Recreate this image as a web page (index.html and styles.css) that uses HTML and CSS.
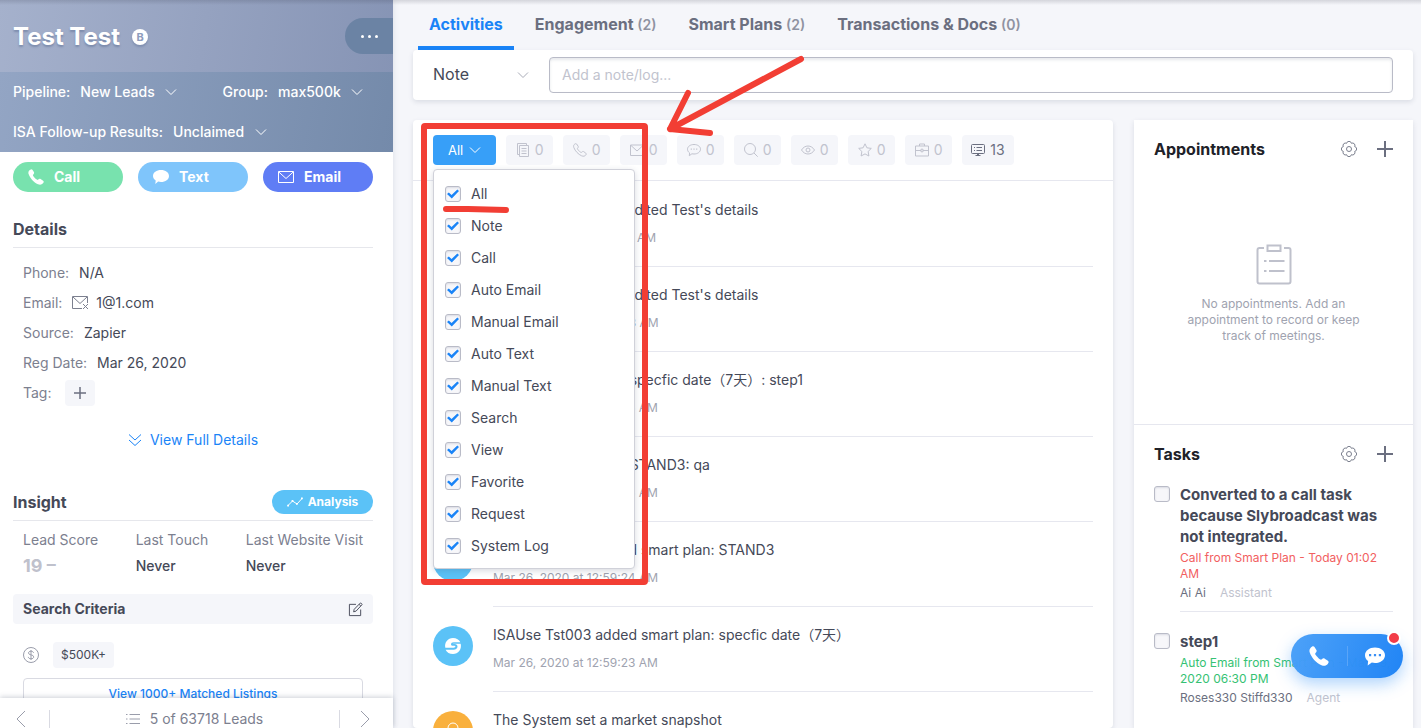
FILE: index.html
```html
<!DOCTYPE html>
<html lang="en">
<head>
<meta charset="utf-8">
<meta name="viewport" content="width=device-width, initial-scale=1">
<title>Test Test - Lead Details</title>
<link rel="stylesheet" href="styles.css">
</head>
<body>
<svg class="defs" aria-hidden="true">
  <symbol id="chev" viewBox="0 0 12 12"><path d="M1 3.500l5 5 5-5"/></symbol>
  <symbol id="plus" viewBox="0 0 16 16"><path d="M8 0v16M0 8h16"/></symbol>
  <symbol id="phone-solid" viewBox="0 0 16 16"><path d="M1.2 1.6C2.3.2 3.6-.3 4.4.7l1.5 2.4c.5.9.2 1.6-.8 2.6-.4.5 0 1.200.9 2.300 1 1.200 2.300 2.400 3.100 2.800.5.2.8.1 1.200-.3.8-.8 1.500-.9 2.300-.4l2.500 1.700c.9.7.8 1.500-.1 2.500-1.200 1.300-2.700 1.900-5 1C5.600 13.500 2 9.200.6 5.100.1 3.600.4 2.600 1.200 1.600z"/></symbol>
  <symbol id="phone-line" viewBox="0 0 14 14"><path d="M1.200 1.600C2 .7 3 .3 3.600 1l1.500 2.200c.4.7.2 1.200-.5 1.900-.5.5.1 1.400 1.200 2.600 1 1.100 2.200 2 2.700 1.700l.6-.5c.6-.6 1.100-.6 1.700-.2l2 1.500c.7.6.6 1.200-.1 1.900-1 1.100-2.200 1.500-4.100.7C5.500 11.500 2.100 8 .9 4.700.4 3.300.5 2.400 1.200 1.600z"/></symbol>
  <symbol id="mail" viewBox="0 0 16 12"><path d="M.5.5h15v11H.5zM.8 1L8 7.500 15.200 1"/></symbol>
  <symbol id="gear" viewBox="0 0 16 16"><path d="M13.700 5.600A2.450 2.450 0 0 1 13.700 10.400A2.450 2.450 0 0 1 10.400 13.700A2.450 2.450 0 0 1 5.600 13.700A2.450 2.450 0 0 1 2.300 10.400A2.450 2.450 0 0 1 2.300 5.600A2.450 2.450 0 0 1 5.600 2.300A2.450 2.450 0 0 1 10.400 2.300A2.450 2.450 0 0 1 13.700 5.600z"/><circle cx="8" cy="8" r="2.500"/></symbol>
  <symbol id="bubble-dots" viewBox="0 0 14 14"><path d="M7 1.500c3.600 0 6.500 2 6.500 4.700S10.600 11 7 11c-.8 0-1.500-.1-2.100-.2L2.300 12.700l.3-2.800C1.300 9 .5 7.700.5 6.200.5 3.500 3.400 1.500 7 1.500z"/><path d="M3.700 5.500h1.200v1.200H3.700zM6.400 5.500h1.200v1.200H6.400zM9.100 5.500h1.200v1.200H9.100z" fill="currentColor" stroke="none"/></symbol>
  <symbol id="slogo" viewBox="0 0 18 18"><path d="M9 1c3.400 0 6.200 1.600 7.400 4.300H9.700C8 5.300 7 6.100 7 7.200c0 1 .8 1.600 2 1.600h1.200c.8 0 1.200.3 1.200.8 0 .7-.7 1.100-1.800 1.100H1.300C.2 5.500 3.800 1 9 1z" fill="#fff"/><path d="M9 17c-3.400 0-6.200-1.600-7.400-4.300h7.900c2.500 0 4-1.200 4-3.200 0-1.600-1.100-2.500-2.900-2.500H9.500c-.6 0-.6-.3.2-.3h7C18 12.500 14.200 17 9 17z" fill="#fff"/></symbol>
</svg>

<div class="app">
  <aside class="side">
    <header class="lead">
      <div class="lead-top">
        <h1 class="lead-name">Test Test</h1>
        <span class="lead-badge">B</span>
        <button class="more" type="button" aria-label="More"><i></i><i></i><i></i></button>
      </div>
      <div class="lead-meta">
        <div class="lead-line">
          <label class="pick"><span>Pipeline:</span><select><option>New Leads</option></select><svg class="ic12"><use href="#chev"/></svg></label>
          <label class="pick"><span>Group:</span><select><option>max500k</option></select><svg class="ic12"><use href="#chev"/></svg></label>
        </div>
        <div class="lead-line">
          <label class="pick"><span>ISA Follow-up Results:</span><select><option>Unclaimed</option></select><svg class="ic12"><use href="#chev"/></svg></label>
        </div>
      </div>
    </header>

    <div class="side-body">
      <div class="actions">
        <button class="act call" type="button"><svg class="ic16 solid"><use href="#phone-solid"/></svg>Call</button>
        <button class="act text" type="button"><svg class="ic16 solid" viewBox="0 0 16 16"><path d="M8 1c4.500 0 8 2.500 8 6s-3.500 6-8 6c-1 0-2-.1-2.800-.4L2.300 15l.4-3.500C1 10.400 0 8.800 0 7c0-3.500 3.500-6 8-6z"/></svg>Text</button>
        <button class="act email" type="button"><svg class="mail16"><use href="#mail"/></svg>Email</button>
      </div>

      <section>
        <h2 class="sec-title details-title">Details</h2>
        <dl class="details">
          <div><dt>Phone:</dt><dd>N/A</dd></div>
          <div><dt>Email:</dt><dd><svg class="mailx" viewBox="0 0 17 14"><path d="M10 12.500H.5V.5h15V7M1 1l7 6.500L15 1M11 8l5 5M16 8l-5 5"/></svg>1@1.com</dd></div>
          <div><dt>Source:</dt><dd>Zapier</dd></div>
          <div><dt>Reg Date:</dt><dd>Mar 26, 2020</dd></div>
          <div><dt>Tag:</dt><dd><button class="tag-add" type="button" aria-label="Add tag"><svg class="ic12"><use href="#plus"/></svg></button></dd></div>
        </dl>
        <a class="full" href="#"><svg class="full-ic" viewBox="0 0 14 14"><path d="M1 1.500l6 5.500 6-5.500M1 7l6 5.500L13 7"/></svg>View Full Details</a>
      </section>

      <section>
        <div class="insight-head">
          <h2 class="sec-title">Insight</h2>
          <button class="analysis" type="button"><svg class="trend" viewBox="0 0 16 10"><path d="M1 8.500l4.500-4.500 4.500 3 5-5.500"/><path class="dots" d="M.2 7.700h1.800v1.800H.2zM4.600 3h1.800v1.800H4.600zM9 6h1.800v1.800H9zM14 .5h1.800v1.800H14z"/></svg>Analysis</button>
        </div>
        <dl class="stats">
          <div><dt>Lead Score</dt><dd class="score">19 –</dd></div>
          <div><dt>Last Touch</dt><dd>Never</dd></div>
          <div><dt>Last Website Visit</dt><dd>Never</dd></div>
        </dl>
      </section>

      <section>
        <div class="criteria-head">
          <h3>Search Criteria</h3>
          <button class="bare" type="button" aria-label="Edit"><svg class="edit" viewBox="0 0 16 16"><path d="M8.500 2.500H1.500v12h12V8M6 10.500l.6-2.700L13 1.200c.6-.6 2.500 1 1.900 1.700L8.600 9.700zM11.800 2.500l1.900 1.800"/></svg></button>
        </div>
        <div class="criteria">
          <svg class="coin" viewBox="0 0 16 16"><circle cx="8" cy="8" r="7.500"/><path d="M10.500 5.800C10.300 4.700 9.300 4.200 8 4.200s-2.500.6-2.500 1.800c0 2.700 5.200 1.100 5.200 3.900 0 1.200-1.200 1.900-2.700 1.900s-2.600-.7-2.700-1.900M8 3v10"/></svg>
          <span class="chip">$500K+</span>
        </div>
        <button class="matched" type="button">View 1000+ Matched Listings</button>
      </section>
    </div>

    <footer class="pager">
      <button class="bare" type="button" aria-label="Previous"><svg class="arrow" viewBox="0 0 10 18"><path d="M9 1L1 9l8 8"/></svg></button>
      <div class="pager-mid"><svg class="list-ic" viewBox="0 0 14 12"><path d="M0 1.500h1.500M3.500 1.500H14M0 6h1.500M3.500 6H14M0 10.500h1.500M3.500 10.500H14"/></svg>5 of 63718 Leads</div>
      <button class="bare" type="button" aria-label="Next"><svg class="arrow" viewBox="0 0 10 18"><path d="M1 1l8 8-8 8"/></svg></button>
    </footer>
  </aside>

  <main class="main">
    <nav class="tabs">
      <a class="tab on" href="#">Activities</a>
      <a class="tab" href="#">Engagement <small>(2)</small></a>
      <a class="tab" href="#">Smart Plans <small>(2)</small></a>
      <a class="tab" href="#">Transactions &amp; Docs <small>(0)</small></a>
    </nav>

    <form class="card composer">
      <label class="kind"><select aria-label="Log type"><option>Note</option></select><svg class="ic12"><use href="#chev"/></svg></label>
      <input class="note" type="text" placeholder="Add a note/log..." aria-label="Note">
    </form>

    <div class="cols">
      <section class="card feed">
        <div class="filters">
          <div class="all-wrap">
            <button class="filter all" type="button">All<svg class="ic12"><use href="#chev"/></svg></button>
            <div class="menu">
              <label><input type="checkbox" checked>All</label>
              <label><input type="checkbox" checked>Note</label>
              <label><input type="checkbox" checked>Call</label>
              <label><input type="checkbox" checked>Auto Email</label>
              <label><input type="checkbox" checked>Manual Email</label>
              <label><input type="checkbox" checked>Auto Text</label>
              <label><input type="checkbox" checked>Manual Text</label>
              <label><input type="checkbox" checked>Search</label>
              <label><input type="checkbox" checked>View</label>
              <label><input type="checkbox" checked>Favorite</label>
              <label><input type="checkbox" checked>Request</label>
              <label><input type="checkbox" checked>System Log</label>
            </div>
          </div>
          <button class="filter" type="button"><svg class="ic14" viewBox="0 0 14 14"><path d="M3.500 2.500h9v11h-9zM3.500 11.500h-2V.5h9v2M5.500 5.500h5M5.500 8h5M5.500 10.500h5"/></svg>0</button>
          <button class="filter" type="button"><svg class="ic14"><use href="#phone-line"/></svg>0</button>
          <button class="filter" type="button"><svg class="ic14" viewBox="0 0 14 14"><path d="M.5 2h13v10.500H.5zM1 2.500L7 8l6-5.500"/></svg>0</button>
          <button class="filter" type="button"><svg class="ic14"><use href="#bubble-dots"/></svg>0</button>
          <button class="filter" type="button"><svg class="ic14" viewBox="0 0 14 14"><circle cx="6" cy="6" r="5.500"/><path d="M10 10l3.700 3.700"/></svg>0</button>
          <button class="filter" type="button"><svg class="ic14" viewBox="0 0 14 14"><path d="M.5 7C2 4.500 4.400 3 7 3s5 1.500 6.500 4C12 9.500 9.600 11 7 11S2 9.500.5 7z"/><circle cx="7" cy="7" r="2"/></svg>0</button>
          <button class="filter" type="button"><svg class="ic14" viewBox="0 0 14 14"><path d="M7 .8l1.900 4 4.400.6-3.200 3.100.8 4.500L7 10.900 3.100 13l.8-4.500L.7 5.400l4.400-.6z"/></svg>0</button>
          <button class="filter" type="button"><svg class="ic14" viewBox="0 0 14 14"><path d="M.5 3h13v10H.5zM4.500 3V1h5v2M.5 7.500H6M8 7.500h5.500M6 6.200h2v2.600H6z"/></svg>0</button>
          <button class="filter live" type="button"><svg class="ic14" viewBox="0 0 14 14"><path d="M1.500 1.500h11q1 0 1 1v7q0 1-1 1h-11q-1 0-1-1v-7q0-1 1-1zM3 4.500h1M5.500 4.500h5.500M3 7.500h1M5.500 7.500h5.500M4.500 12.500h5M6 11.500h2"/></svg>13</button>
        </div>

        <ol class="log">
          <li><span class="av"><svg class="ic18"><use href="#slogo"/></svg></span><div class="entry"><p>ISAUse Tst003 also edited Test's details</p><time>Mar 26, 2020 at 01:02:10 AM</time></div></li>
          <li><span class="av"><svg class="ic18"><use href="#slogo"/></svg></span><div class="entry"><p>ISAUse Tst003 also edited Test's details</p><time>Mar 26, 2020 at 01:02:08 AM</time></div></li>
          <li><span class="av"><svg class="ic18"><use href="#slogo"/></svg></span><div class="entry"><p>System: Smart Plan: specfic date（7天）: step1</p><time>Mar 26, 2020 at 12:59:25 AM</time></div></li>
          <li><span class="av"><svg class="ic18"><use href="#slogo"/></svg></span><div class="entry"><p>System: Smart Plan: STAND3: qa</p><time>Mar 26, 2020 at 12:59:25 AM</time></div></li>
          <li><span class="av"><svg class="ic18"><use href="#slogo"/></svg></span><div class="entry"><p>ISAUse Tst003 added smart plan: STAND3</p><time>Mar 26, 2020 at 12:59:24 AM</time></div></li>
          <li><span class="av"><svg class="ic18"><use href="#slogo"/></svg></span><div class="entry"><p>ISAUse Tst003 added smart plan: specfic date（7天）</p><time>Mar 26, 2020 at 12:59:23 AM</time></div></li>
          <li><span class="av warm"><svg class="ic18" viewBox="0 0 18 18"><circle cx="9" cy="6" r="5"/><path d="M2 17c0-4 3-6 7-6s7 2 7 6"/></svg></span><div class="entry"><p>The System set a market snapshot</p></div></li>
        </ol>
      </section>

      <aside class="card rail">
        <section class="appts">
          <div class="rail-head"><h2>Appointments</h2><button class="bare" type="button" aria-label="Appointment settings"><svg class="ic16 gear"><use href="#gear"/></svg></button><button class="bare" type="button" aria-label="Add appointment"><svg class="ic16 add"><use href="#plus"/></svg></button></div>
          <div class="empty">
            <svg class="clip" viewBox="0 0 36 41"><path d="M8 4H3.500Q1.500 4 1.500 6v31.500q0 2 2 2h29q2 0 2-2V6q0-2-2-2H28M11.500 1.500h13v5.500h-13zM8 17h2.500M13 17h15.500M8 27h2.500M13 27h15.500"/></svg>
            <p>No appointments. Add an appointment to record or keep track of meetings.</p>
          </div>
        </section>
        <section class="tasks">
          <div class="rail-head"><h2>Tasks</h2><button class="bare" type="button" aria-label="Task settings"><svg class="ic16 gear"><use href="#gear"/></svg></button><button class="bare" type="button" aria-label="Add task"><svg class="ic16 add"><use href="#plus"/></svg></button></div>
          <div class="task">
            <input type="checkbox" id="t1">
            <div class="task-body"><label for="t1">Converted to a call task because Slybroadcast was not integrated.</label><p class="late">Call from Smart Plan - Today 01:02 AM</p><p class="who">Ai Ai<span>Assistant</span></p></div>
          </div>
          <div class="task">
            <input type="checkbox" id="t2">
            <div class="task-body"><label for="t2">step1</label><p class="soon">Auto Email from Smart Plan - Mar 29, 2020 06:30 PM</p><p class="who">Roses330 Stiffd330<span>Agent</span></p></div>
          </div>
        </section>
      </aside>
    </div>
  </main>
</div>

<div class="dock">
  <button type="button" aria-label="Call"><svg class="dock-ic"><use href="#phone-solid"/></svg></button>
  <button type="button" aria-label="Messages"><svg class="dock-ic" viewBox="0 0 20 20"><path d="M10 1.500c5.600 0 10 3.300 10 7.700S15.600 17 10 17c-1.100 0-2.200-.1-3.200-.4L2.700 19.500l.4-4.500C1.200 13.600 0 11.500 0 9.200c0-4.400 4.400-7.700 10-7.700z"/><path fill="#3a8ff5" d="M4 8h2.200v2.200H4zM8.900 8h2.200v2.200H8.900zM13.800 8H16v2.200h-2.200z"/></svg></button>
  <span class="dot"></span>
</div>

<svg class="marks" viewBox="0 0 400 540" aria-hidden="true">
  <rect x="4" y="75" width="221" height="456" rx="1"/>
  <path d="M26 158l22 0 38 1"/>
  <path d="M381 8L250 78M268 42l-18 36 40 4"/>
</svg>
</body>
</html>
```
FILE: styles.css
```css
* { box-sizing: border-box; }
body {
  margin: 0;
  background: #f5f6fa;
  color: #454958;
  font: 14px/20px Inter, "Noto Sans CJK SC", sans-serif;
}
h1, h2, h3, p, dl, dd, ol { margin: 0; padding: 0; }
ol { list-style: none; }
a { text-decoration: none; color: #1a84f7; }
button, select, input { font: inherit; color: inherit; }
button { border: 0; padding: 0; cursor: pointer; }
select { appearance: none; border: 0; padding: 0; background: none; }
svg { display: block; flex: none; fill: none; stroke: currentColor; stroke-width: 1; }
.defs { position: absolute; width: 0; height: 0; }
.ic12 { width: 12px; height: 12px; }
.ic14 { width: 14px; height: 14px; }
.ic16 { width: 16px; height: 16px; }
.ic18 { width: 18px; height: 18px; }
.solid { fill: #fff; stroke: none; }
.bare { background: none; }

.app { display: flex; height: 100vh; overflow: hidden; }
.app::before {
  content: "";
  position: absolute;
  inset: 0 0 auto;
  height: 5px;
  background: linear-gradient(rgba(40, 44, 60, .16), rgba(40, 44, 60, 0));
}

/* Lead sidebar */
.side {
  flex: none;
  width: 393px;
  display: flex;
  flex-direction: column;
  background: #fff;
  box-shadow: 0 0 6px rgba(60, 70, 100, .14);
}
.lead { flex: none; color: #fff; background: linear-gradient(100deg, #a5b1cc, #8593b4); }
.lead-top { display: flex; align-items: center; height: 72px; padding: 2px 0 0 13px; gap: 12px; }
.lead-name { font-size: 24px; line-height: 32px; font-weight: 700; text-shadow: 0 2px 2px rgba(70, 90, 130, .4); }
.lead-badge {
  width: 16px; height: 16px; border-radius: 8px;
  background: #fff; color: #8e9cbd;
  font-size: 11px; line-height: 16px; font-weight: 700; text-align: center;
  box-shadow: 0 2px 2px rgba(70, 90, 130, .3);
}
.more {
  display: flex; align-items: center; justify-content: center; gap: 4px;
  width: 48px; height: 36px; margin: 0 0 2px auto;
  border-radius: 18px 0 0 18px; background: #6b83a4;
}
.more i { width: 3px; height: 3px; border-radius: 50%; background: #fff; }
.lead-meta { height: 80px; background: linear-gradient(100deg, #93a5c4, #748aaa); font-weight: 500; }
.lead-line { display: flex; justify-content: space-between; padding: 0 30px 0 13px; }
.pick { display: flex; align-items: center; gap: 10px; height: 40px; }

.side-body { flex: 1; min-height: 0; overflow: hidden; padding: 10px 20px 0 13px; }
.actions { display: flex; gap: 15px; }
.act {
  flex: 1; display: flex; align-items: center; gap: 10px;
  height: 30px; padding-left: 15px; border-radius: 15px;
  color: #fff; font-weight: 700;
}
.call { background: #78e2ae; }
.text { background: #7fc5fb; }
.email { background: #5f7df5; }
.mail16 { width: 16px; height: 12px; }
.sec-title { font-size: 16px; line-height: 22px; font-weight: 700; }
.details-title { margin-top: 26px; padding-bottom: 7px; border-bottom: 1px solid #e6e7ec; }
.details { padding: 10px 10px 0; }
.details > div { display: flex; align-items: center; gap: 10px; height: 30px; }
.details dt { color: #7c808f; }
.details dd { display: flex; align-items: center; gap: 7px; }
.mailx { width: 17px; height: 14px; color: #7c808f; }
.tag-add {
  display: grid; place-items: center;
  width: 30px; height: 26px; margin-left: 3px; border-radius: 4px;
  background: #f5f6fa; color: #6b6f80;
}
.tag-add svg { stroke-width: 2; }
.full { display: flex; justify-content: center; align-items: center; gap: 8px; margin-top: 22px; }
.full-ic { width: 14px; height: 14px; }
.insight-head {
  display: flex; align-items: center; justify-content: space-between;
  margin-top: 40px; padding-bottom: 6px; border-bottom: 1px solid #e6e7ec;
}
.analysis {
  display: flex; align-items: center; justify-content: center; gap: 5px;
  width: 101px; height: 24px; border-radius: 12px;
  background: #5bc2f7; color: #fff; font-size: 12px; font-weight: 700;
}
.trend { width: 16px; height: 10px; }
.trend .dots { fill: #fff; stroke: none; }
.stats { display: flex; justify-content: space-between; padding: 9px 10px 0; }
.stats dt { color: #7c808f; }
.stats dd { margin-top: 6px; font-weight: 500; }
.stats .score { color: #bfc1cc; font-size: 18px; font-weight: 700; }
.criteria-head {
  display: flex; align-items: center; justify-content: space-between;
  height: 30px; margin-top: 18px; padding: 0 10px; border-radius: 4px; background: #f5f6fa;
}
.criteria-head h3 { font-size: 14px; font-weight: 700; }
.edit { width: 15px; height: 15px; }
.criteria { display: flex; align-items: center; gap: 14px; padding: 18px 10px 10px; }
.coin { width: 16px; height: 16px; color: #9a9dab; }
.chip { padding: 3px 8px; border-radius: 4px; background: #f5f6fa; font-size: 12px; }
.matched {
  display: block; width: calc(100% - 20px); height: 32px; margin: 0 10px;
  border: 1px solid #d9dae2; border-radius: 4px; background: #fff;
  color: #1a84f7; font-size: 12px; font-weight: 500;
}
.pager {
  flex: none; display: flex; align-items: flex-start; justify-content: space-between;
  height: 30px; padding: 12px 23px 0 16px; overflow: hidden;
  background: #fff; color: #7c808f; box-shadow: 0 -1px 5px rgba(60, 70, 100, .25);
}
.arrow { width: 10px; height: 18px; color: #9a9dab; }
.pager-mid {
  flex: 1; display: flex; align-items: center; justify-content: center; gap: 10px;
  margin: 0 20px 0 23px; line-height: 18px;
  border: solid #d9dae2; border-width: 0 1px;
}
.list-ic { width: 14px; height: 12px; color: #9a9dab; }

/* Main area */
.main { flex: 1; min-width: 0; display: flex; flex-direction: column; padding: 0 8px 0 20px; }
.tabs { flex: none; display: flex; gap: 10px; height: 50px; padding-left: 5px; }
.tab {
  padding: 13px 11px 0; border-bottom: 4px solid transparent;
  color: #6b6f80; font-size: 16px; line-height: 22px; font-weight: 700; white-space: nowrap;
}
.tab small { font-size: 14px; font-weight: 600; color: #8f92a1; }
.tab.on { color: #1a84f7; border-color: #1a84f7; }
.card { background: #fff; border-radius: 4px; box-shadow: 0 2px 5px rgba(60, 70, 100, .14); }
.composer { flex: none; display: flex; align-items: center; gap: 20px; height: 50px; padding: 0 20px; }
.kind { display: flex; align-items: center; justify-content: space-between; width: 96px; font-size: 16px; color: #454958; }
.kind select { padding-bottom: 2px; }
.kind svg { color: #a9acb8; }
.note {
  flex: 1; min-width: 0; height: 36px; padding: 0 12px 2px;
  border: 1px solid #b9bbc7; border-radius: 4px; background: #fff;
  box-shadow: inset 0 2px 3px rgba(60, 70, 100, .12);
}
.note::placeholder { color: #c1c3ce; }
.cols { flex: 1; min-height: 0; display: flex; gap: 21px; margin-top: 20px; }
.feed { flex: 1; min-width: 0; }
.filters { display: flex; gap: 10px; height: 61px; padding: 15px 20px; border-bottom: 1px solid #e6e7ef; }
.all-wrap { position: relative; }
.filter {
  display: flex; align-items: center; justify-content: center; gap: 5px;
  min-width: 47px; height: 30px; padding: 0 9px; border-radius: 4px;
  background: #f5f6fa; color: #c1c3ce;
}
.live { color: #6b6f80; }
.filter.all { gap: 6px; padding: 0 15px; background: #379ff8; color: #fff; font-size: 13px; }
.menu {
  position: absolute; z-index: 2; top: 34px; left: 0;
  width: 202px; padding: 8px 0 6px 11px;
  border: 1px solid #d0d1d9; border-radius: 4px; background: #fff;
  box-shadow: 0 2px 6px rgba(60, 70, 100, .2);
}
.menu label { display: flex; align-items: center; gap: 10px; height: 32px; }
input[type="checkbox"] {
  appearance: none; flex: none; width: 16px; height: 16px; margin: 0;
  border: 1px solid #b9bbc7; border-radius: 3px;
  background: #f7f7fa; box-shadow: inset 0 1px 2px rgba(60, 70, 100, .15);
}
.menu input { display: grid; place-items: center; }
.menu input:checked::before {
  content: ""; width: 12px; height: 10px; background: #1a84f7;
  clip-path: polygon(0 50%, 15% 34%, 38% 60%, 86% 5%, 100% 20%, 40% 96%);
}
.log { padding: 1px 20px 0; }
.log li { display: flex; gap: 20px; }
.av {
  flex: none; display: grid; place-items: center;
  width: 40px; height: 40px; margin-top: 19px; border-radius: 20px;
  background: #5bc2f7; color: #fff;
}
.av use { stroke: none; }
.warm { background: #f9b03d; }
.entry { flex: 1; height: 85px; padding-top: 18px; border-bottom: 1px solid #e6e7ef; }
.log time { display: block; margin-top: 10px; color: #a0a3b0; font-size: 12px; line-height: 16px; }

/* Right rail */
.rail { flex: none; width: 279px; border-radius: 0; }
.appts { min-height: 305px; border-bottom: 1px solid #e6e7ef; }
.rail-head { display: flex; align-items: center; padding: 18px 20px 0; gap: 20px; }
.rail-head h2 { flex: 1; color: #202128; font-size: 16px; line-height: 22px; font-weight: 700; }
.gear { color: #7c808f; }
.add { color: #6b6f80; stroke-width: 2; }
.empty { display: flex; flex-direction: column; align-items: center; gap: 11px; padding: 84px 50px 0; }
.clip { width: 36px; height: 41px; color: #bfc1cc; stroke-width: 2; }
.empty p { color: #a0a3b0; font-size: 12px; line-height: 16px; text-align: center; }
.task { display: flex; gap: 10px; padding: 19px 20px 0; }
.task input { margin-top: 2px; }
.task-body { flex: 1; min-width: 0; padding-bottom: 10px; border-bottom: 1px solid #e6e7ef; font-size: 12px; line-height: 16px; }
.task-body label { display: block; font-size: 15px; line-height: 21px; font-weight: 700; margin-bottom: 3px; }
.task:last-child .task-body { border: 0; }
.late { color: #f2605f; }
.soon { color: #35c273; }
.who { margin-top: 3px; color: #6b6f80; }
.who span { margin-left: 14px; color: #c1c3ce; }

/* Floating dialer */
.dock {
  position: fixed; right: 18px; bottom: 50px;
  display: flex; width: 112px; height: 44px; border-radius: 22px;
  background: linear-gradient(110deg, rgba(74, 160, 248, .98), rgba(28, 130, 245, .98));
  box-shadow: 0 6px 16px rgba(26, 132, 247, .35);
}
.dock button { flex: 1; display: grid; place-items: center; background: none; }
.dock button + button { background: linear-gradient(#5aa5f8, #5aa5f8) 0 50% / 1px 20px no-repeat; }
.dock-ic { width: 20px; height: 20px; fill: #fff; stroke: none; }
.dot {
  position: absolute; top: -3px; right: 2px; width: 14px; height: 14px;
  border: 2px solid #fff; border-radius: 50%; background: #f23c48;
}

/* Hand-drawn annotations */
.marks {
  position: absolute; z-index: 5; left: 420px; top: 51px;
  width: 400px; height: 540px; pointer-events: none;
  color: #f23e34; stroke-width: 6; stroke-linecap: round; stroke-linejoin: round;
}
```
